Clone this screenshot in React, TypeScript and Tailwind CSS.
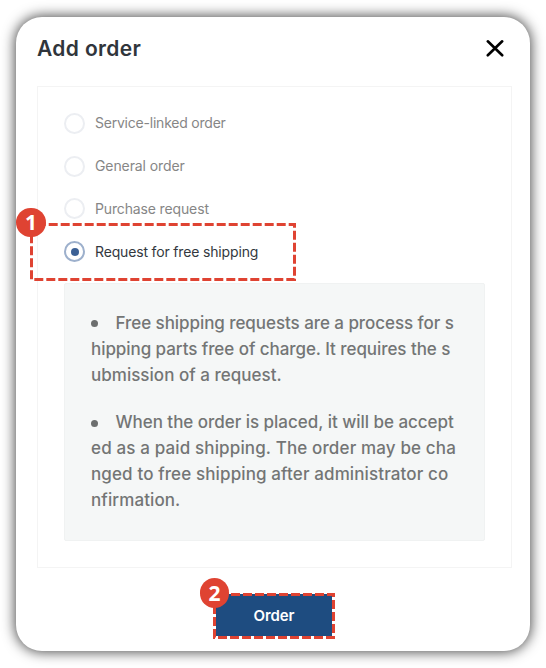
const options = [
  { label: "Service-linked order", tracking: "tracking-[-0.22px]" },
  { label: "General order", tracking: "tracking-[-0.1px]" },
  { label: "Purchase request", tracking: "tracking-[-0.14px]" },
];

const notes = [
  [
    { text: "Free shipping requests are a process for s", tracking: "tracking-[-0.06px]" },
    { text: "hipping parts free of charge. It requires the s", tracking: "tracking-[-0.06px]" },
    { text: "ubmission of a request.", tracking: "tracking-[0.02px]" },
  ],
  [
    { text: "When the order is placed, it will be accept", tracking: "tracking-[-0.03px]" },
    { text: "ed as a paid shipping. The order may be cha", tracking: "tracking-[0.14px]" },
    { text: "nged to free shipping after administrator co", tracking: "tracking-[0.12px]" },
    { text: "nfirmation.", tracking: "tracking-[0.1px]" },
  ],
];

function Badge({ n, className }: { n: number; className: string }) {
  return (
    <span
      className={`absolute flex items-center justify-center rounded-full bg-[#df4332] font-['Noto_Sans','Open_Sans',sans-serif] text-[21px] leading-none font-bold text-white ${className}`}
    >
      {n}
    </span>
  );
}

export default function App() {
  return (
    <div className="flex h-[668px] w-[546px] bg-white pt-[17px] pl-4 font-['Inter',sans-serif]">
      <main className="flex h-[634px] w-[514px] flex-col rounded-[26px] bg-white px-[21px] shadow-[0_0_13px_1px_rgba(0,0,0,0.72)]">
        <header className="flex h-[69px] items-center justify-between pr-[5px] pb-[7px]">
          <h1 className="pt-[2px] text-[21px] font-semibold tracking-[0.36px] whitespace-nowrap text-[#30353b]">Add order</h1>
          <svg width="18" height="18" viewBox="0 0 18 18" stroke="#000" strokeWidth="2.6" strokeLinecap="round">
            <path d="M1.8 2.3 16.2 16.3M16.2 2.3 1.8 16.3" />
          </svg>
        </header>
        <section className="h-[482px] w-[475px] border-[1.5px] border-[#f4f4f4] px-[26px] pt-[15px]">
          {options.map((o) => (
            <div key={o.label} className="flex h-[42.8px] items-center gap-[10px]">
              <span className="h-[21px] w-[21px] rounded-full border-2 border-[#eceef2]" />
              <span className={`pb-px text-[14px] whitespace-nowrap text-[#868686] ${o.tracking}`}>{o.label}</span>
            </div>
          ))}
          <div className="relative flex h-[42.8px] items-center gap-[10px]">
            <span className="flex h-[21px] w-[21px] items-center justify-center rounded-full border-2 border-[#9db0cc]">
              <span className="h-2 w-2 rounded-full bg-[#3b6095]" />
            </span>
            <span className="pb-px text-[14px] tracking-[-0.16px] whitespace-nowrap text-[#33383e]">Request for free shipping</span>
            <svg className="absolute top-[-7px] left-[-34px]" width="266" height="58" fill="none">
              <path d="M1.5 1.5h263v55h-263Z" stroke="#df4332" strokeWidth="3" strokeDasharray="9 3" strokeDashoffset="6.8" />
            </svg>
            <Badge n={1} className="top-[-22px] left-[-48px] h-[29px] w-[30px]" />
          </div>
          <div className="mt-[10px] h-[258px] w-[421px] rounded-[2px] border border-[#f0f2f2] bg-[#f5f7f7] px-[26px] pt-[26.8px] text-[17px] leading-[25.9px] font-medium text-[#737575]">
            {notes.map((lines, i) => (
              <div key={i} className="mb-[21.6px]">
                {lines.map((l, j) => (
                  <div key={l.text} className="flex items-center">
                    {j === 0 && <span className="mr-[17.5px] h-[7px] w-[7px] rounded-full bg-[#6c6e6e]" />}
                    <span className={`whitespace-nowrap ${l.tracking}`}>{l.text}</span>
                  </div>
                ))}
              </div>
            ))}
          </div>
        </section>
        <div className="flex pt-[26px] pl-[179px]">
          <div className="relative">
            <button className="block h-[42px] w-[116px] bg-[#1e4c80] pt-[3px] text-[15px] font-semibold tracking-[-0.1px] text-white">Order</button>
            <svg className="absolute top-[-1px] left-[-3px]" width="122" height="46" fill="none">
              <path d="M1.5 1.5h119v43h-119Z" stroke="#df4332" strokeWidth="3" strokeDasharray="9 3" strokeDashoffset="7.5" />
            </svg>
            <Badge n={2} className="top-[-16px] left-[-16px] h-[30px] w-[29px]" />
          </div>
        </div>
      </main>
    </div>
  );
}
